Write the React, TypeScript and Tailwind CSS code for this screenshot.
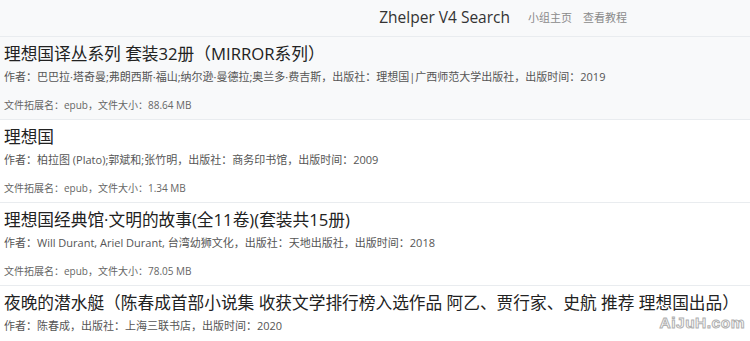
const books = [
  {
    title: '理想国译丛系列 套装32册（MIRROR系列）',
    author: '巴巴拉·塔奇曼;弗朗西斯·福山;纳尔逊·曼德拉;奥兰多·费吉斯',
    publisher: '理想国|广西师范大学出版社',
    year: '2019',
    ext: 'epub',
    size: '88.64 MB',
  },
  {
    title: '理想国',
    author: '柏拉图 (Plato);郭斌和;张竹明',
    publisher: '商务印书馆',
    year: '2009',
    ext: 'epub',
    size: '1.34 MB',
  },
  {
    title: '理想国经典馆·文明的故事(全11卷)(套装共15册)',
    author: 'Will Durant, Ariel Durant, 台湾幼狮文化',
    publisher: '天地出版社',
    year: '2018',
    ext: 'epub',
    size: '78.05 MB',
  },
  {
    title: '夜晚的潜水艇（陈春成首部小说集 收获文学排行榜入选作品 阿乙、贾行家、史航 推荐 理想国出品）',
    author: '陈春成',
    publisher: '上海三联书店',
    year: '2020',
    ext: 'epub',
    size: '',
  },
]

export default function App() {
  return (
    <div className="relative w-[750px] h-[341px] overflow-hidden bg-white font-['Open_Sans','Noto_Sans_CJK_SC',sans-serif]">
      <nav className="h-[36px] bg-[#f8f9fa] flex items-center justify-end pr-[123px]">
        <span className="text-[15.5px] text-[#333] leading-none">Zhelper V4 Search</span>
        <a className="ml-[18px] text-[11px] text-[#8a8a8a]">小组主页</a>
        <a className="ml-[11px] text-[11px] text-[#8a8a8a]">查看教程</a>
      </nav>

      <div>
        {books.map((book, i) => (
          <div
            key={i}
            className={`border-t border-[#e9ecef] px-[4px] pt-[5px] pb-[6px] ${i === 0 ? 'bg-[#f8f9fa]' : 'bg-white'}`}
          >
            <div className="text-[16.7px] leading-[24px] text-[#222] whitespace-nowrap">{book.title}</div>
            <div className="mt-[3px] text-[11px] leading-[16px] text-[#555] whitespace-nowrap">
              作者：{book.author}，出版社：{book.publisher}，出版时间：{book.year}
            </div>
            {book.size && (
              <div className="mt-[12px] text-[10px] leading-[16px] text-[#666] whitespace-nowrap">
                文件拓展名：{book.ext}，文件大小：{book.size}
              </div>
            )}
          </div>
        ))}
      </div>

      <div className="absolute right-[5px] bottom-[9px] text-[15.5px] leading-[18px] font-bold tracking-[0.5px] text-white [-webkit-text-stroke:1px_#b0b0b0] font-['Liberation_Sans',sans-serif]">
        AiJuH.com
      </div>
    </div>
  )
}
